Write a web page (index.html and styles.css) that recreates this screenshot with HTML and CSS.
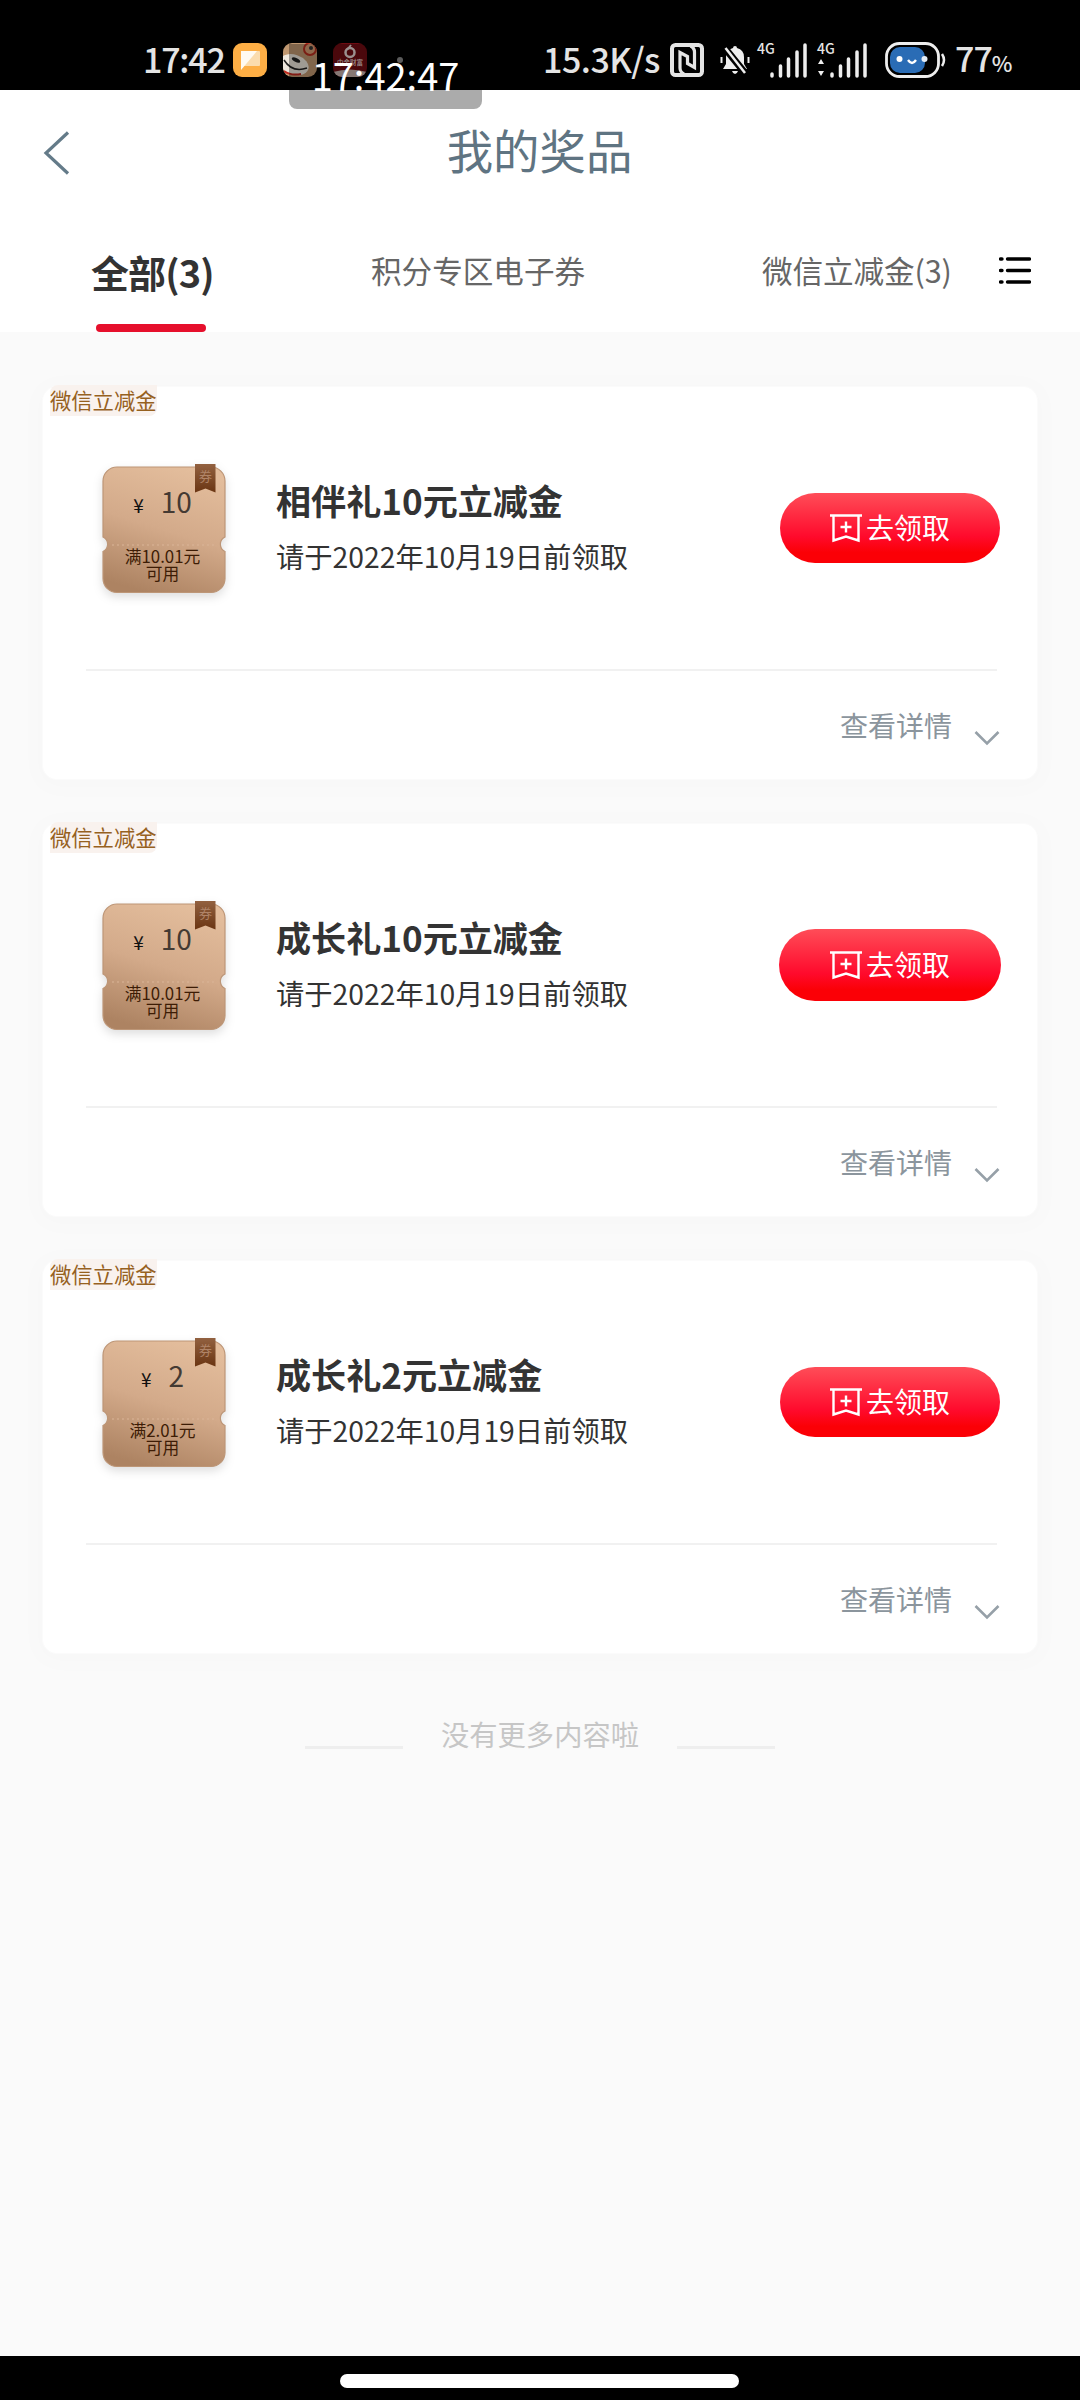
FILE: index.html
```html
<!DOCTYPE html>
<html lang="zh-CN">
<head>
<meta charset="utf-8">
<title>我的奖品</title>
<link rel="stylesheet" href="styles.css">
</head>
<body>
<svg class="defs" width="0" height="0" aria-hidden="true">
  <defs>
    <linearGradient id="gold" x1="0.65" y1="0" x2="0.35" y2="1">
      <stop offset="0" stop-color="#e3bd9c"/><stop offset="0.5" stop-color="#d3aa8a"/><stop offset="1" stop-color="#ad8362"/>
    </linearGradient>
    <linearGradient id="ribbon" x1="0" y1="0" x2="0" y2="1">
      <stop offset="0" stop-color="#926140"/><stop offset="1" stop-color="#6a3512"/>
    </linearGradient>
    <symbol id="ticket" viewBox="0 0 124 132">
      <path d="M15 4H109a14 14 0 0 1 14 14V74a8 8 0 0 0 0 14.500V115.500a14 14 0 0 1 -14 14H15a14 14 0 0 1 -14 -14V88.500a8 8 0 0 0 0 -14.500V18A14 14 0 0 1 15 4Z" fill="url(#gold)" stroke="#bd9677" stroke-width="1.200"/>
      <path d="M10 82H114" stroke="#dab598" stroke-width="1" stroke-dasharray="2 3"/>
      <path d="M93 1H113.500V29.500L103.500 25.500L93 29.500Z" fill="url(#ribbon)"/>
    </symbol>
    <symbol id="claim" viewBox="0 0 34 30">
      <path d="M1 2.500H33M4.500 2.500V27.500L17 23.500L29.500 27.500V2.500M17 8.500V19.500M11.500 14H22.500" fill="none" stroke="#fff" stroke-width="2.400"/>
    </symbol>
    <symbol id="down" viewBox="0 0 26 16">
      <path d="M1.500 2L13 13.500L24.500 2" fill="none" stroke="#96a0a8" stroke-width="2.600"/>
    </symbol>
  </defs>
</svg>

<div class="status">
  <span class="status-time">17:42</span>
  <svg class="app" width="34" height="34" viewBox="0 0 34 34"><rect width="34" height="34" rx="9" fill="#fdae45"/><rect x="8" y="8" width="19" height="15" rx="1" fill="#fbdcae"/><path d="M8 8H24L8 27Z" fill="#fffaf2"/></svg>
  <svg class="app app-dog" width="34" height="34" viewBox="0 0 34 34"><clipPath id="r"><rect width="34" height="34" rx="9"/></clipPath><g clip-path="url(#r)"><rect width="34" height="34" fill="#bf9770"/><circle cx="27" cy="6" r="6" fill="#d59b72" stroke="#b72e1e" stroke-width="2"/><circle cx="28" cy="5" r="2" fill="#333"/><ellipse cx="11" cy="22" rx="15" ry="10" fill="#eee7dd" transform="rotate(18 12 22)"/><ellipse cx="13" cy="17" rx="4.500" ry="2" fill="#222" transform="rotate(25 13 17)"/><path d="M1 17Q9 30 24 25" fill="none" stroke="#222" stroke-width="1.500"/><path d="M1 28Q8 33 18 31" fill="none" stroke="#c22a20" stroke-width="2"/></g></svg>
  <svg class="app app-red" width="34" height="34" viewBox="0 0 34 34"><g clip-path="url(#r)"><rect width="34" height="34" fill="#6f0c12"/><circle cx="17" cy="9.500" r="4.500" fill="none" stroke="#e8d8d6" stroke-width="2.500"/><path d="M18 2L14 7" stroke="#e8d8d6" stroke-width="2"/><path d="M0 29Q17 24 34 29V34H0Z" fill="#c8b4ae"/><text x="17" y="22" class="app-label">中金财富</text></g></svg>
  <span class="dot"></span>
  <span class="status-speed">15.3K/s</span>
  <svg class="nfc" width="34" height="34" viewBox="0 0 34 34"><rect x="2" y="2" width="30" height="30" rx="3.500" fill="none" stroke="#e4e4e4" stroke-width="4"/><path d="M10 25V9.500L17.500 13.500V20.500L24.500 24.500V9M10 25Q10 29 14 31M24.500 9Q24.500 5 20.500 3" fill="none" stroke="#e4e4e4" stroke-width="3.200"/></svg>
  <svg class="bell" width="30" height="30" viewBox="0 0 30 30"><path d="M15 1Q17 1 17 3Q24 5 24 12V19L27 24H3L6 19V12Q6 5 13 3Q13 1 15 1Z" fill="#eee"/><path d="M12 26H18Q17 29 15 29T12 26Z" fill="#eee"/><path d="M1.500 12V18M28.500 12V18" stroke="#eee" stroke-width="2"/><path d="M4 2L25 28" stroke="#000" stroke-width="7"/><path d="M5.500 3L25 28" stroke="#eee" stroke-width="2.500"/></svg>
  <span class="signal"><b>4G</b><svg width="50" height="36" viewBox="0 0 50 36"><path d="M15 32V34M23.500 24V34M31.500 17V34M40 10V34M48 3V34" stroke="#eee" stroke-width="3.500" stroke-linecap="round"/></svg></span>
  <span class="signal second"><b>4G</b><svg width="50" height="36" viewBox="0 0 50 36"><path d="M15 32V34M23.500 24V34M31.500 17V34M40 10V34M48 3V34" stroke="#eee" stroke-width="3.500" stroke-linecap="round"/><path d="M1 22L4 17L7 22ZM1 29L4 34L7 29Z" fill="#eee"/></svg></span>
  <svg class="battery" width="61" height="36" viewBox="0 0 61 36"><rect x="1.500" y="1.500" width="52" height="33" rx="13" fill="#000" stroke="#eee" stroke-width="2.800"/><rect x="5" y="5" width="35" height="26" rx="10" fill="#2a6cb5"/><circle cx="14.500" cy="17" r="3" fill="#fff"/><circle cx="39.500" cy="17" r="3" fill="#e4edf6"/><path d="M23 18Q27 24 31 18" fill="none" stroke="#fff" stroke-width="2.300"/><path d="M57 12Q61 18 57 24" fill="none" stroke="#eee" stroke-width="2.500"/></svg>
  <span class="status-pct">77<small>%</small></span>
  <div class="clock">17:42:47</div>
</div>

<header class="header">
  <div class="titlebar">
    <svg class="back" width="28" height="46" viewBox="0 0 28 46"><path d="M25 2.500L3 23L25 43.500" fill="none" stroke="#647b89" stroke-width="3.200"/></svg>
    <h1>我的奖品</h1>
  </div>
  <nav class="tabs">
    <a class="tab active">全部(3)</a>
    <a class="tab points">积分专区电子券</a>
    <a class="tab wechat">微信立减金(3)</a>
    <svg class="menu" width="32" height="28" viewBox="0 0 32 28"><path d="M8.500 3H30.500M8.500 14.500H30.500M8.500 26H30.500M1.500 3H3M1.500 14.500H3M1.500 26H3" stroke="#000" stroke-width="3.400" stroke-linecap="round"/></svg>
  </nav>
</header>

<main class="list">
  <article class="card">
    <span class="tag">微信立减金</span>
    <div class="row">
      <div class="coupon"><svg class="ticket" width="124" height="132"><use href="#ticket"/></svg><span class="seal">券</span><p class="amount"><i>¥</i>10</p><p class="rule">满10.01元<br>可用</p></div>
      <div class="info"><h2>相伴礼10元立减金</h2><p>请于2022年10月19日前领取</p></div>
      <a class="claim"><svg width="34" height="30"><use href="#claim"/></svg><span>去领取</span></a>
    </div>
    <div class="detail">查看详情<svg width="26" height="16"><use href="#down"/></svg></div>
  </article>
  <article class="card">
    <span class="tag">微信立减金</span>
    <div class="row">
      <div class="coupon"><svg class="ticket" width="124" height="132"><use href="#ticket"/></svg><span class="seal">券</span><p class="amount"><i>¥</i>10</p><p class="rule">满10.01元<br>可用</p></div>
      <div class="info"><h2>成长礼10元立减金</h2><p>请于2022年10月19日前领取</p></div>
      <a class="claim large"><svg width="34" height="30"><use href="#claim"/></svg><span>去领取</span></a>
    </div>
    <div class="detail">查看详情<svg width="26" height="16"><use href="#down"/></svg></div>
  </article>
  <article class="card">
    <span class="tag">微信立减金</span>
    <div class="row">
      <div class="coupon"><svg class="ticket" width="124" height="132"><use href="#ticket"/></svg><span class="seal">券</span><p class="amount"><i>¥</i>2</p><p class="rule">满2.01元<br>可用</p></div>
      <div class="info"><h2>成长礼2元立减金</h2><p>请于2022年10月19日前领取</p></div>
      <a class="claim"><svg width="34" height="30"><use href="#claim"/></svg><span>去领取</span></a>
    </div>
    <div class="detail">查看详情<svg width="26" height="16"><use href="#down"/></svg></div>
  </article>
  <p class="end">没有更多内容啦</p>
</main>

<footer class="navbar"><span></span></footer>
</body>
</html>
```
FILE: styles.css
```css
* { box-sizing: border-box; margin: 0; padding: 0; }
body {
  width: 1080px; height: 2400px; overflow: hidden;
  display: flex; flex-direction: column;
  background: #fafafa; color: #333;
  font-family: "Noto Sans CJK SC", sans-serif;
}
svg { display: block; flex: none; }
.defs { position: absolute; }

/* status bar */
.status {
  position: relative; flex: none; height: 90px; padding: 30px 0 0 143px;
  display: flex; align-items: center; background: #000; color: #e4e4e4;
  font-weight: 500; white-space: nowrap;
}
.status-time { width: 90px; font-size: 34px; line-height: 58px; letter-spacing: -1.2px; padding-bottom: 2px; }
.app-dog, .app-red { margin-left: 16px; }
.app-label { font-size: 6.5px; fill: #e8d8d6; text-anchor: middle; }
.dot { width: 6px; height: 6px; margin-left: 30px; border-radius: 50%; background: #888; }
.status-speed { width: 127px; margin-left: 140px; font-size: 34px; line-height: 58px; letter-spacing: -.5px; padding-bottom: 2px; }
.bell { margin-left: 16px; }
.signal { position: relative; width: 50px; margin-left: 7px; }
.signal.second { margin-left: 10px; }
.signal b { position: absolute; left: 0; top: -1px; font: 500 14px/14px "Noto Sans CJK SC", sans-serif; }
.battery { margin-left: 18px; }
.status-pct { margin-left: 9px; font-size: 34px; line-height: 60px; letter-spacing: -1px; }
.status-pct small { font-size: 22px; }
.clock {
  position: absolute; left: 289px; top: 44px; width: 193px; height: 65px;
  border-radius: 0 0 8px 8px; background: rgba(0, 0, 0, .33); color: #fff;
  font-size: 38px; line-height: 61px; font-weight: 400; text-align: center;
}

/* title and tabs */
.header { flex: none; height: 242px; background: #fff; }
.titlebar { display: flex; align-items: center; height: 125px; padding-left: 43px; }
.titlebar h1 {
  flex: 1; margin: -8px 72px 0 0; text-align: center;
  font-size: 46.4px; line-height: 60px; font-weight: 400; color: #5f7482;
}
.tabs { display: flex; align-items: center; height: 117px; padding-left: 90px; }
.tab { height: 117px; line-height: 110px; font-size: 30.6px; color: #666; white-space: nowrap; }
.tab.active {
  position: relative; width: 122px; margin-right: 159px; padding-left: 1px;
  font-size: 38px; font-weight: 700; color: #333; line-height: 113px; letter-spacing: -.9px;
}
.tab.active::after {
  content: ""; position: absolute; left: 6px; bottom: 0; width: 110px; height: 8px;
  border-radius: 4px; background: #e60f2c;
}
.points { width: 391px; }
.wechat { width: 190px; letter-spacing: -.1px; }
.menu { margin: -7px 0 0 47px; }

/* prize cards */
.list { flex: 1; padding: 55px 43px 0; display: flex; flex-direction: column; gap: 45px; }
.card {
  flex: none; height: 392px; border-radius: 14px; background: #fff;
  box-shadow: 0 0 0 1px #fbfbfb, 0 3px 22px 10px rgba(0, 0, 0, .012);
}
.tag {
  display: block; width: 107px; height: 31px; margin: -2px 0 0 7px; background: #f9f2ee;
  font-size: 21.3px; line-height: 29px; color: #96611f; border-radius: 8px 0 8px 0; white-space: nowrap;
}
.row {
  display: flex; align-items: flex-start; height: 255px; margin: 0 40px 0 43px;
  padding: 47px 0 0 16px; border-bottom: 2px solid #f1f1f1;
}
.coupon { position: relative; flex: none; width: 124px; height: 132px; padding: 27px 3px 0 0; text-align: center; color: #3a2b20; }
.ticket { position: absolute; left: 0; top: 0; filter: drop-shadow(0 4px 5px rgba(0, 0, 0, .13)); }
.coupon p { position: relative; }
.seal { position: absolute; left: 97px; top: 4px; font-size: 13px; line-height: 18px; color: #b08468; }
.amount { font-size: 28px; line-height: 22px; color: #443a33; }
.amount i { margin-right: 17px; font-size: 19px; font-style: normal; color: #111; }
.rule { margin-top: 32px; font-size: 16.8px; line-height: 17px; color: #3d1c05; }
.info { flex: none; width: 504px; margin-left: 50px; padding-top: 13px; white-space: nowrap; }
.info h2 { font-size: 35.1px; line-height: 48px; font-weight: 700; }
.info p { margin-top: 11px; font-size: 28.3px; line-height: 42px; }
.claim {
  flex: none; width: 220px; height: 70px; margin-top: 30px; padding-right: 1px; border-radius: 36px;
  display: flex; align-items: center; justify-content: center; gap: 3px;
  background: linear-gradient(#ff4d58, #ff0a2c 62%, #fb0006 85%); color: #fff;
  font-size: 28px; white-space: nowrap;
}
.claim span { margin-top: -3px; }
.claim.large { width: 222px; height: 72px; margin: 29px 0 0 -1px; }
.detail {
  display: flex; gap: 22px; padding: 33px 38px 0 797px;
  font-size: 28px; line-height: 42px; color: #8b959d; white-space: nowrap;
}
.detail svg { margin-top: 26px; }

/* end of list */
.end {
  display: flex; justify-content: center; gap: 38px; margin-top: -6px;
  font-size: 28.3px; line-height: 84px; color: #c6c6c6;
}
.end::before, .end::after { content: ""; width: 98px; height: 3px; margin-top: 54px; background: #eee; }

.navbar { flex: none; height: 44px; padding-top: 18px; background: #000; }
.navbar span { display: block; width: 399px; height: 14px; margin-left: 340px; border-radius: 7px; background: #fff; }
```
